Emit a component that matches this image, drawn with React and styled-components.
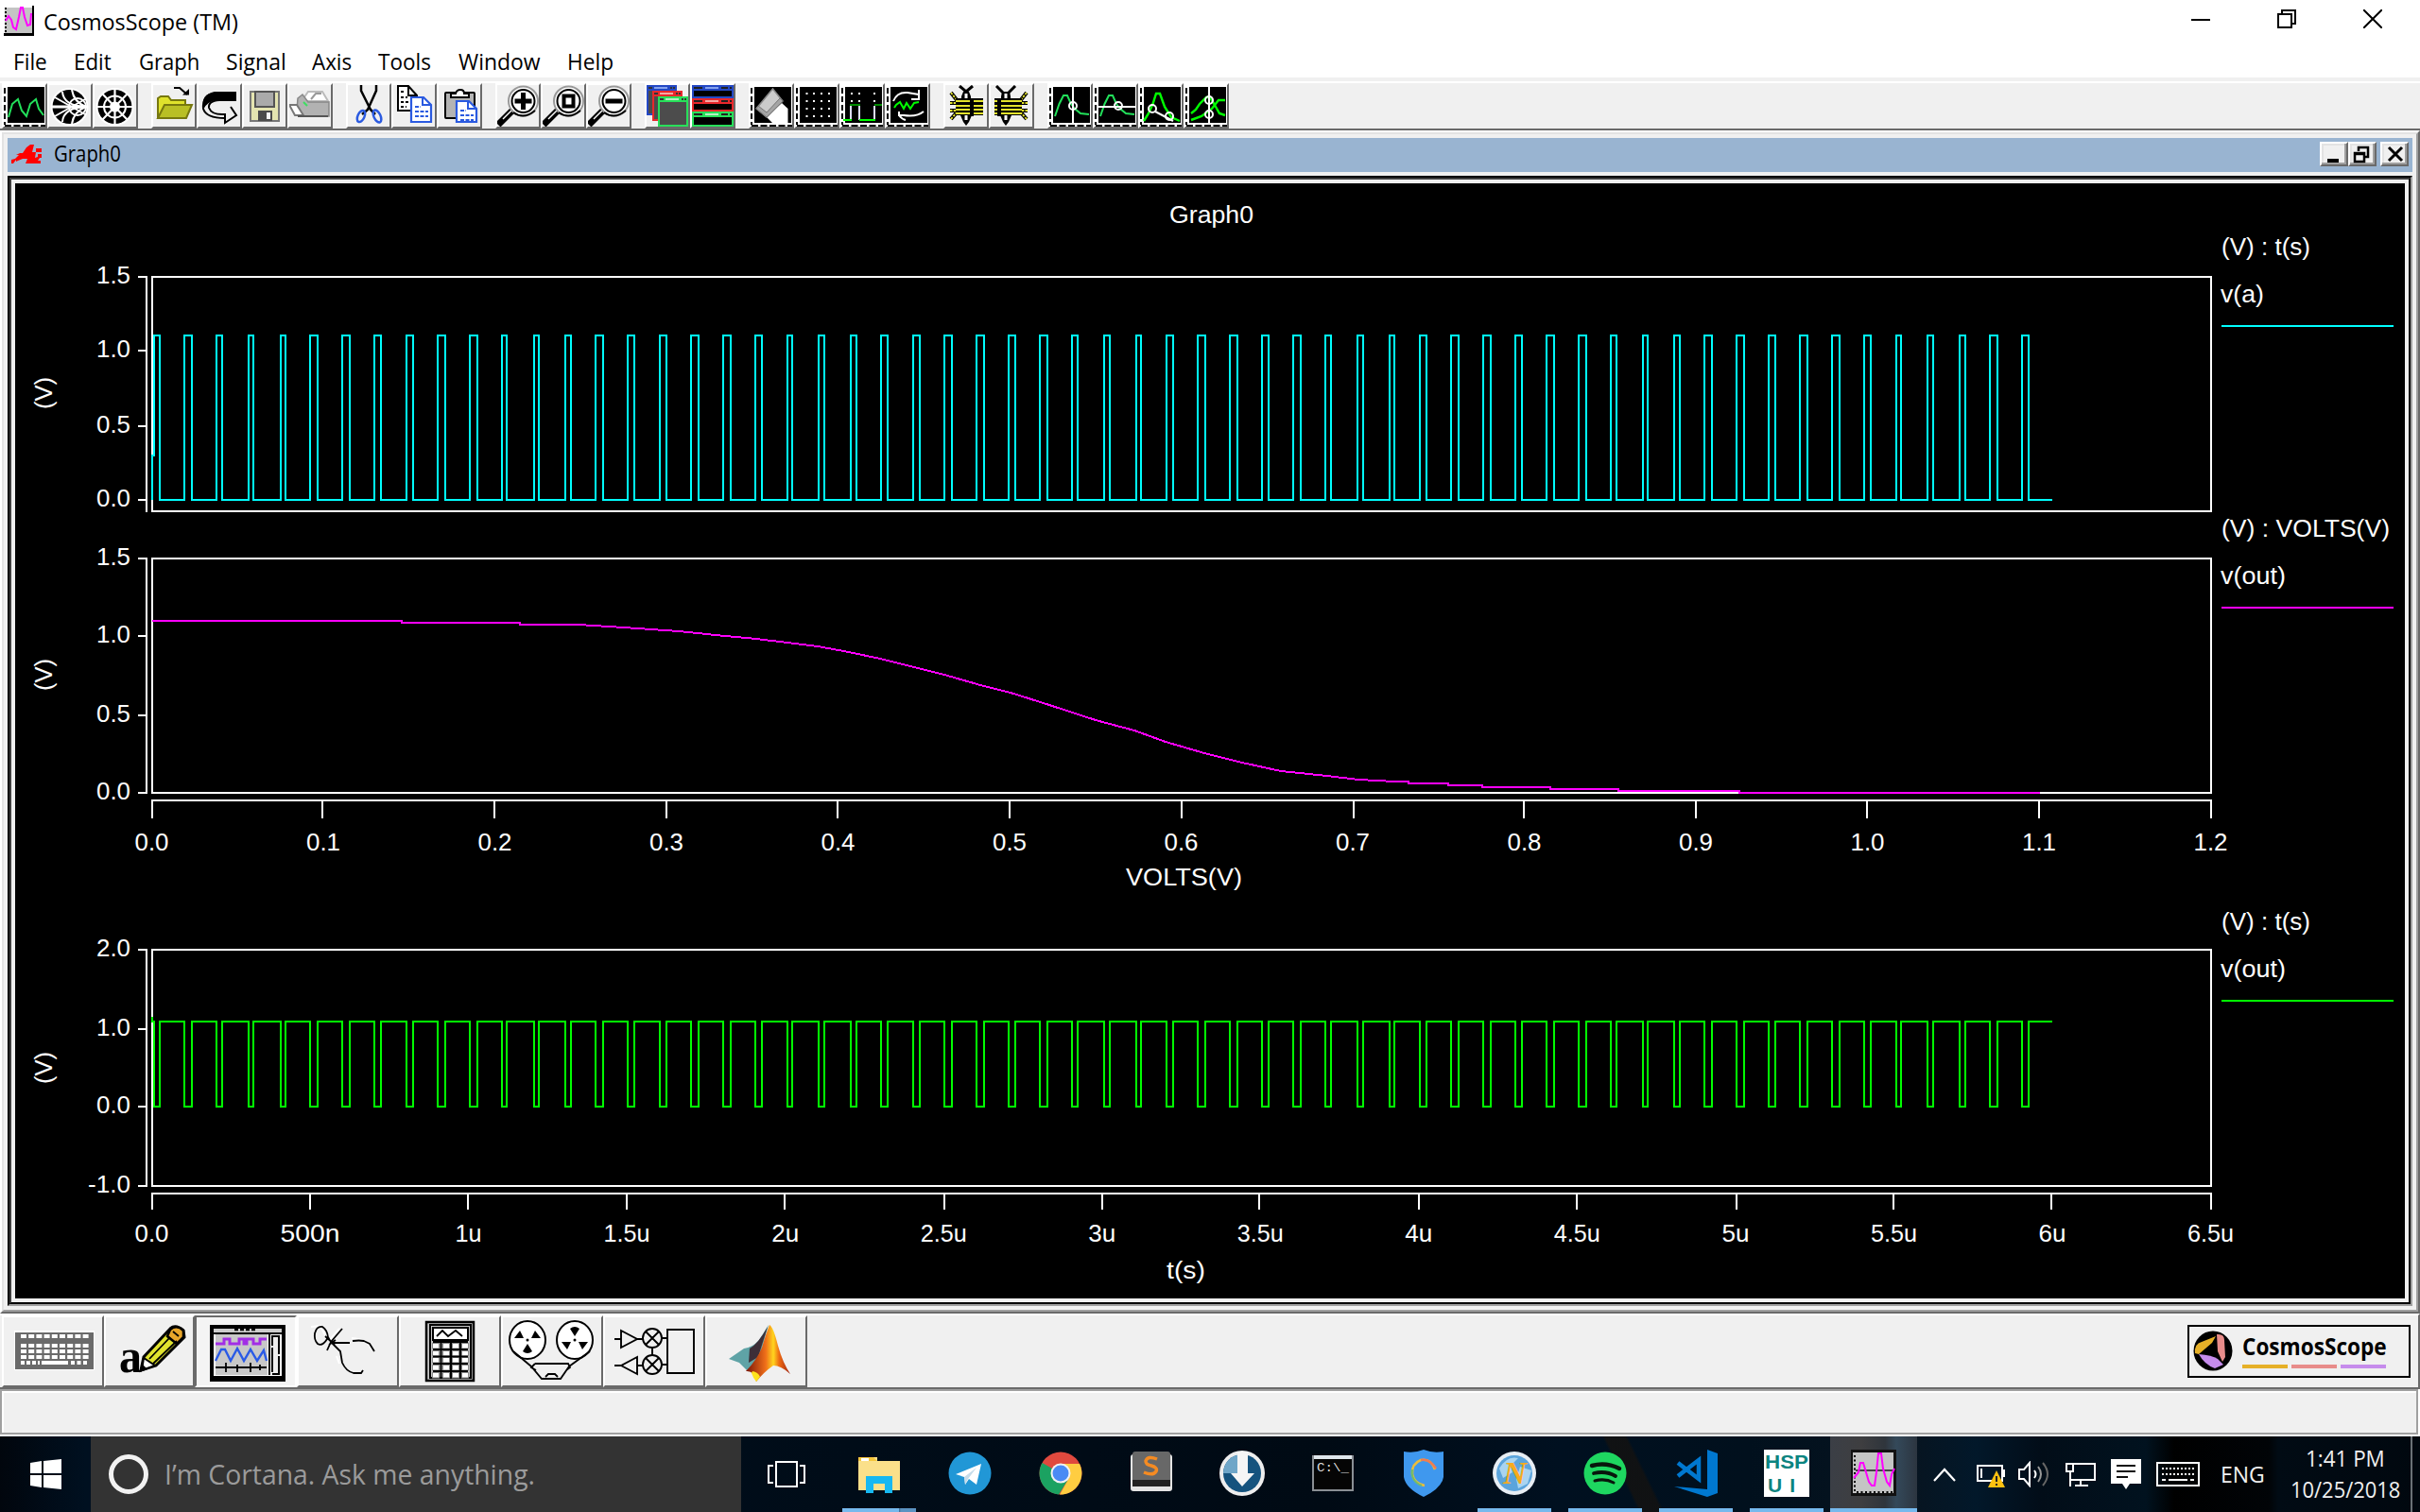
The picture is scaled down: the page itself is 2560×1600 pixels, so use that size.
import React, { useLayoutEffect, useRef, useState } from 'react';
import styled, { createGlobalStyle, css } from 'styled-components';

const UI_FONT = '"Open Sans", "Noto Sans", sans-serif';
const FACE = '#f0f0f0';
const SHADOW = '#6a6a6a';
const MID = '#a0a0a0';

const GlobalStyle = createGlobalStyle`
  * { box-sizing: border-box; }
  body { margin: 0; background: #fff; overflow: hidden; }
  svg { display: block; flex: none; }
`;

/* ---------- text set to a fixed measure ---------- */

const FitBox = styled.span`
  display: block;
  flex: none;
  width: ${(p) => p.$w}px;
  height: ${(p) => p.$size * 1.36}px;
  line-height: ${(p) => p.$size * 1.36}px;
  font-family: ${(p) => p.$font || UI_FONT};
  font-size: ${(p) => p.$size}px;
  font-weight: ${(p) => p.$weight || 400};
  color: ${(p) => p.$color || '#000'};
`;
const FitInner = styled.span`
  display: inline-block;
  white-space: nowrap;
  transform-origin: 0 50%;
`;

function Fit({ w, size, color, font, weight, children }) {
  const ref = useRef(null);
  const [k, setK] = useState(1);
  useLayoutEffect(() => {
    setK(w / ref.current.offsetWidth);
  }, [w, children]);
  return (
    <FitBox $w={w} $size={size} $color={color} $font={font} $weight={weight}>
      <FitInner ref={ref} style={{ transform: `scaleX(${k})` }}>{children}</FitInner>
    </FitBox>
  );
}

/* ---------- window chrome ---------- */

const Screen = styled.div`
  width: 2560px;
  height: 1600px;
  display: flex;
  flex-direction: column;
  background: ${FACE};
  overflow: hidden;
`;
const TitleBar = styled.header`
  height: 44px;
  flex: none;
  display: flex;
  align-items: flex-start;
  justify-content: space-between;
  background: #fff;
  padding: 6px 40px 0 4px;
`;
const TitleGroup = styled.div`
  display: flex;
  gap: 10px;
`;
const WindowControls = styled.div`
  display: flex;
  gap: 71px;
  padding-top: 4px;
`;
const MenuBar = styled.nav`
  height: 38px;
  flex: none;
  background: #fff;
  display: flex;
  padding: 4px 0 0 14px;
`;
const MenuItem = styled.div`
  width: ${(p) => p.$slot}px;
`;
const ToolBar = styled.div`
  height: 56px;
  flex: none;
  display: flex;
  gap: 14px;
  padding-left: 2px;
  border-top: 4px solid ${FACE};
  border-bottom: 2px solid ${SHADOW};
  box-shadow: inset 0 2px 0 #fff;
  padding-top: 2px;
`;
const ToolGroup = styled.div`
  display: flex;
`;
const ToolButton = styled.div`
  width: 48px;
  height: 48px;
  border: 2px solid;
  border-color: #fff ${SHADOW} ${SHADOW} #fff;
  background: ${FACE};
`;

/* ---------- graph child window ---------- */

const Child = styled.section`
  height: 1252px;
  flex: none;
  border: 2px solid;
  border-color: #fff ${SHADOW} ${SHADOW} #fff;
`;
const ChildInner = styled.div`
  height: 100%;
  border: 2px solid;
  border-color: #e3e3e3 ${MID} ${MID} #e3e3e3;
  padding: 4px;
  display: flex;
  flex-direction: column;
  gap: 4px;
`;
const ChildTitle = styled.div`
  height: 36px;
  flex: none;
  background: #99b4d1;
  display: flex;
  justify-content: space-between;
  padding: 4px 4px 0 4px;
`;
const ChildName = styled.div`
  display: flex;
  gap: 13px;
  align-items: center;
  height: 26px;
`;
const ChildButtons = styled.div`
  display: flex;
`;
const ChildButton = styled.div`
  width: 30px;
  height: 26px;
  margin-left: ${(p) => (p.$apart ? 4 : 0)}px;
  background: ${FACE};
  border: 2px solid;
  border-color: #fff ${SHADOW} ${SHADOW} #fff;
  box-shadow: inset -2px -2px 0 ${MID}, inset 2px 2px 0 #e3e3e3;
`;
const Well = styled.div`
  flex: 1;
  border: 2px solid;
  border-color: #000 ${MID} ${MID} #000;
`;
const WellInner = styled.div`
  height: 100%;
  border: 2px solid;
  border-color: #3f3f3f #000 #000 #3f3f3f;
  padding: 4px;
  background: ${FACE};
`;

/* ---------- lower tool palette and status ---------- */

const Palette = styled.div`
  height: 80px;
  flex: none;
  border-top: 2px solid #fff;
  border-bottom: 2px solid ${SHADOW};
  border-right: 2px solid ${SHADOW};
  display: flex;
  justify-content: space-between;
  padding-left: 2px;
`;
const PaletteRow = styled.div`
  display: flex;
`;
const PaletteButton = styled.div`
  width: ${(p) => p.$w || 108}px;
  height: 76px;
  border: 2px solid;
  border-color: #fff ${SHADOW} ${SHADOW} #fff;
  ${(p) => p.$down && css`
    border-color: ${SHADOW} #fff #fff ${SHADOW};
    background: #f4f4f4;
  `}
`;
const Brand = styled.div`
  width: 236px;
  height: 56px;
  margin: 10px 8px 0 0;
  border: 2px solid #000;
  display: flex;
  gap: 10px;
  padding: 4px 0 0 4px;
`;
const BrandText = styled.div`
  display: flex;
  flex-direction: column;
`;
const BrandBars = styled.div`
  display: flex;
  gap: 4px;
  margin-top: 3px;
`;
const BrandBar = styled.div`
  width: 48px;
  height: 4px;
  background: ${(p) => p.$c};
`;
const Status = styled.div`
  height: 50px;
  flex: none;
  border-bottom: 2px solid #fff;
  border-right: 2px solid #fff;
`;
const StatusInner = styled.div`
  height: 100%;
  border: 2px solid ${MID};
  box-shadow: inset 2px 2px 0 #fff;
`;

/* ---------- task bar ---------- */

const TaskBar = styled.footer`
  height: 80px;
  flex: none;
  display: flex;
  background:
    linear-gradient(64deg, transparent 0 1558px, rgba(18, 18, 18, 0.9) 1561px 1580px, transparent 1583px),
    linear-gradient(90deg, #01060d 0, #001020 90px, #000c18 900px, #000a14 1400px, #001020 1650px, #01101d 1850px, #071420 2020px, #02182a 2090px, #020d18 2160px, #01121f 2270px, #000 2300px, #010407 2400px, #010b14 2410px, #01080f 2560px);
`;
const Start = styled.div`
  width: 96px;
  flex: none;
  display: flex;
  align-items: center;
  justify-content: center;
`;
const Search = styled.div`
  width: 688px;
  flex: none;
  background: #333;
  display: flex;
  align-items: center;
  gap: 16px;
  padding-left: 18px;
`;
const TaskView = styled.div`
  width: 98px;
  flex: none;
  display: flex;
  align-items: center;
  justify-content: center;
  padding-right: 2px;
`;
const Task = styled.div`
  width: 96px;
  flex: none;
  display: flex;
  flex-direction: column;
  align-items: center;
  justify-content: space-between;
  padding-top: 14px;
`;
const ActiveTask = styled(Task)`
  width: 92px;
  margin-left: -2px;
  background: linear-gradient(90deg, #3b3f46 0, #3e3e40 33px, #2f353c 58px, #34495a 70px, #2c3540 92px);
`;
const Underline = styled.div`
  width: ${(p) => p.$w}px;
  height: 4px;
  background: ${(p) => (p.$stack ? 'linear-gradient(90deg, #76b9ed 60px, #3f6b91 60px, #5b93c2 62px)' : p.$on ? '#76b9ed' : 'transparent')};
`;
const Tray = styled.div`
  flex: 1;
  display: flex;
  align-items: center;
  justify-content: flex-end;
`;
const TrayItem = styled.div`
  margin-left: ${(p) => p.$gap}px;
  flex: none;
`;
const Clock = styled.div`
  width: 114px;
  margin-left: 28px;
  display: flex;
  flex-direction: column;
  align-items: center;
`;
const ShowDesktop = styled.div`
  align-self: stretch;
  width: 10px;
  margin-left: 12px;
  border-left: 2px solid #6b7176;
`;

/* ---------- toolbar drawings ---------- */

const Glyph = ({ children }) => (
  <svg width="44" height="44" viewBox="2 2 44 44">{children}</svg>
);
const PlotBase = () => (
  <g>
    <rect x="2" y="2" width="44" height="44" fill="#fff" />
    <rect x="6" y="4" width="39" height="38" fill="#000" />
    <path d="M3 5V44" stroke="#000" strokeWidth="2" strokeDasharray="6 3" />
    <path d="M3 45H46" stroke="#000" strokeWidth="2" strokeDasharray="7 2.5" />
  </g>
);
const Line = ({ d, c = '#000', w = 2, ...r }) => (
  <path d={d} fill="none" stroke={c} strokeWidth={w} {...r} />
);

const NewGraph = () => (
  <Glyph><PlotBase /><Line c="#22e05a" d="M7 36L11 22L17 17L21 29L26 35L30 22L36 17L39 27L44 34" /></Glyph>
);
const Smith = () => (
  <Glyph>
    <circle cx="23.5" cy="25" r="20" fill="#fff" /><circle cx="23.5" cy="25" r="18" />
    <g fill="none" stroke="#fff" strokeWidth="2">
      <path d="M5 25H42" strokeWidth="3" />
      <circle cx="32" cy="25" r="9" /><path d="M16 9Q17 24 41 25Q17 26 16 41M26 7Q28 20 41 25Q28 30 26 43M8 15L40 33M8 35L40 17" />
    </g>
  </Glyph>
);
const Polar = () => (
  <Glyph>
    <circle cx="23.5" cy="25" r="20" fill="#fff" /><circle cx="23.5" cy="25" r="18" />
    <g fill="none" stroke="#fff" strokeWidth="2">
      <circle cx="23.5" cy="25" r="11.5" /><circle cx="23.5" cy="25" r="4.5" fill="#fff" />
      <path d="M23.500 6V44M5 25H42M10 11L37 39M10 39L37 11" strokeWidth="2.200" />
    </g>
  </Glyph>
);
const Folder = () => (
  <Glyph>
    <path d="M7 37V16L10 14H18L21 18H36V23" fill="#dfe22c" stroke="#77780f" strokeWidth="2" />
    <path d="M7 37L14 23H43L37 37Z" fill="#b9bf25" stroke="#77780f" strokeWidth="2" />
    <Line d="M24 5H30L38 12" /><path d="M33 12.500H40V6Z" />
  </Glyph>
);
const Undo = () => (
  <Glyph>
    <path d="M42 10V18H22Q11 19 7 28Q4 10 20 10Z" />
    <Line d="M42 10H19Q6 13 7 27Q10 37 30 37V42L42 34L36 25M30 37V33Q16 34 13 26Q12 19 24 18H42" />
  </Glyph>
);
const Floppy = () => (
  <Glyph>
    <rect x="9" y="9" width="30" height="31" fill="#e4e4b0" stroke="#777" strokeWidth="2" />
    <rect x="14" y="9" width="20" height="16" fill="#aaa" stroke="#555" strokeWidth="2" />
    <rect x="17" y="29" width="15" height="11" fill="#4b4b4b" /><rect x="26" y="31" width="4" height="7" fill="#f5f5f5" />
  </Glyph>
);
const Printer = () => (
  <Glyph>
    <path d="M15 19L22 9H37L43 19Z" fill="#fff" stroke="#bbb" strokeWidth="2" />
    <path d="M25 17L30 11H36" fill="none" stroke="#999" strokeWidth="2" />
    <path d="M11 16L16 12L22 20H44V35H14L10 28Z" fill="#b2b2b2" stroke="#888" strokeWidth="1.500" />
    <path d="M2 23H10L17 34H8Z" fill="#fff" stroke="#777" strokeWidth="2" />
    <Line c="#555" d="M11 35H43" w={2} /><Line c="#3ce060" d="M17 20L21 24" />
  </Glyph>
);
const Cut = () => (
  <Glyph>
    <Line d="M16 2V8L26 28L31 33M32 2V8L23 28L17 33" w={2.5} />
    <g fill="none" stroke="#2a5ae0" strokeWidth="2.500">
      <ellipse cx="16" cy="35" rx="3.500" ry="6.500" transform="rotate(25 16 35)" /><ellipse cx="33" cy="35" rx="3.500" ry="7" transform="rotate(-25 33 35)" />
    </g>
  </Glyph>
);
const BluePage = ({ y = 14 }) => (
  <g>
    <path d={`M21 ${y}H34L42 ${y + 8}V41H21Z`} fill="#fff" stroke="#2a5ae0" strokeWidth="2.200" />
    <Line c="#2a5ae0" d={`M33 ${y}V${y + 8}H42`} />
    <Line c="#2a5ae0" d={`M25 ${y + 10}H31M25 ${y + 15}H39M25 ${y + 20}H39`} strokeDasharray="4 1.500" />
  </g>
);
const Copy = () => (
  <Glyph>
    <path d="M7 3H18L27 13V29H7Z" fill="#fff" stroke="#000" strokeWidth="2" /><Line d="M18 3V13H27" />
    <Line d="M10 9H14M10 15H17M10 20H19M10 25H16" strokeDasharray="3 2" /><BluePage y={15} />
  </Glyph>
);
const Paste = () => (
  <Glyph>
    <rect x="9" y="10" width="31" height="27" rx="1" fill="#b4b4b4" stroke="#000" strokeWidth="2" />
    <path d="M15 15V11H20Q21 7 25 7Q29 7 29 11H34V15Z" fill="#fff" stroke="#000" strokeWidth="2" /><BluePage y={19} />
  </Glyph>
);
const Zoom = ({ children }) => (
  <Glyph>
    <Line d="M3 44L19 28" w={7} /><Line c="#fff" d="M8 38L17 29" w={1.5} />
    <circle cx="29.500" cy="19" r="15.500" fill="#fff" stroke="#9a9a9a" strokeWidth="2" />
    <circle cx="29.500" cy="19" r="12" fill="#fff" stroke="#000" strokeWidth="2" />
    <Line d="M19 31Q30 39 42 29" />
    {children}
  </Glyph>
);
const Win = ({ x, y, c, light }) => (
  <g>
    <rect x={x} y={y} width="32" height="32" fill={c} /><rect x={x + 2} y={y + 6} width="28" height="24" fill="#4c4c4c" />
    <rect x={x + 8} y={y + 2} width="14" height="2" fill={light} />
    <path d={`M${x + 2} ${y + 3}h4M${x + 25} ${y + 3}h2M${x + 28} ${y + 3}h2`} stroke="#333" strokeWidth="2" />
  </g>
);
const Cascade = () => (
  <Glyph>
    <Win x={2} y={2} c="#2448c4" light="#86a2ee" /><Win x={8} y={8} c="#e8282c" light="#f4a8a4" /><Win x={14} y={14} c="#28e05a" light="#b6f0c2" />
  </Glyph>
);
const Tile = () => (
  <Glyph>
    {[['#2448c4', '#86a2ee', 2], ['#e8282c', '#f4a8a4', 16], ['#28e05a', '#b6f0c2', 30]].map(([c, l, y]) => (
      <g key={y}>
        <rect x="2" y={y} width="44" height={y === 30 ? 16 : 14} fill={c} /><rect x="4" y={y + 6} width="40" height={y === 30 ? 8 : 6} />
        <rect x="16" y={y + 2} width="14" height="2" fill={l} /><path d={`M4 ${y + 3}h9M33 ${y + 3}h7M42 ${y + 3}h2`} stroke="#222" strokeWidth="2" />
      </g>
    ))}
  </Glyph>
);
const Erase = () => (
  <Glyph>
    <PlotBase />
    <path d="M35 21L41.500 27V42H25L18 35Z" fill="#fff" />
    <path d="M25.500 6L36 19L19 36L8 27Z" fill="#cbcbcb" stroke="#888" strokeWidth="1.500" />
    <path d="M36 19L19 36L8 27L10 24L19 31L33 16Z" fill="#a5a5a5" stroke="#777" strokeWidth="1" />
  </Glyph>
);
const Dots = () => (
  <Glyph>
    <PlotBase />
    {[11, 19, 27, 35].map((y) => [13.5, 21, 29, 37].map((x) => <rect key={`${x}-${y}`} x={x - 1} y={y - 1} width="2" height="2" fill="#fff" />))}
  </Glyph>
);
const Snap = () => (
  <Glyph>
    <PlotBase />
    {[11, 19].map((y) => [13, 21, 37].map((x) => <rect key={`${x}-${y}`} x={x - 1} y={y - 1} width="2" height="2" fill="#fff" />))}
    <Line c="#dcdcff" d="M12 24V39M21 24V39M37 24V39" /><Line c="#008a00" d="M11 23H22M37 23H45" /><Line c="#00ff00" d="M4 39H13M21 39H38" />
  </Glyph>
);
const Refresh = () => (
  <Glyph>
    <PlotBase />
    <Line c="#fff" d="M9 19Q13 9 24 10L36 12V7V17H28M41 30Q34 36 20 34H15V30M15 34Q18 38 22 39" />
    <Line c="#00ff00" d="M10 26L12 23L16 20L20 27L23 21L27 27L31 21L36 20" />
  </Glyph>
);
const Legs = ({ c, w, dash }) => (
  <Line c={c} d="M8 10L15 19M7 21H15M7 29H15M8 38L15 30" w={w} strokeDasharray={dash} />
);
const BugBody = ({ head, seam }) => (
  <g>
    <g transform={`translate(${head - 24} 0)`}>
      <path d="M19 14L21 9H27L29 14V18H19ZM18 34H30L27 41L24 45L21 41Z" /><path d="M22.500 11H25.500V16H22.500ZM22.500 34H25.500V39H22.500Z" fill="#fff" />
    </g>
    <Legs w={4} /><Legs c="#e2e22c" w={1.8} dash="2.5 1.2" />
    <rect x="13" y="16" width="29" height="18" /><Line c="#e2e22c" d="M13 19H42M13 24H42M13 28H42M13 32H42" w={2.2} />
    <rect x={seam - 2} y="16" width="4" height="19" />
  </g>
);
const BugClosed = () => (
  <Glyph><Line d="M17 3L24 9L31 3M24 8V16" w={3} /><BugBody head={24} seam={30} /></Glyph>
);
const BugOpen = () => (
  <Glyph>
    <Line d="M8 3L15 10V15M28 3L21 10V15" w={3} />
    <g transform="translate(48 0) scale(-1 1)"><BugBody head={30} seam={37} /></g>
  </Glyph>
);
const PEAK = 'M8 35L12.500 22L17 13H21L25 22L29 27L35 32L44 33';
const MeasureX = () => (
  <Glyph><PlotBase /><Line c="#22e05a" d={PEAK} /><Line c="#fff" d="M27 4V42" /><circle cx="27" cy="24" r="4" fill="none" stroke="#fff" strokeWidth="2" /></Glyph>
);
const MeasureY = () => (
  <Glyph><PlotBase /><Line c="#22e05a" d={PEAK} /><Line c="#fff" d="M6 25H45" /><circle cx="27" cy="24" r="4" fill="none" stroke="#fff" strokeWidth="2" /></Glyph>
);
const MeasurePair = () => (
  <Glyph>
    <PlotBase /><Line c="#00ff00" w={2.4} d="M6 40L11 32L15.500 22L19 11H23L28 25L35 36L44 40" />
    <g fill="none" stroke="#fff" strokeWidth="2"><circle cx="15" cy="27" r="4" /><circle cx="33" cy="35" r="4" /><path d="M18 30L37 40" /></g>
  </Glyph>
);
const MeasureCross = () => (
  <Glyph>
    <PlotBase /><Line c="#00ff00" w={2.4} d="M8 32L13 28L17 22L24 15H28L33 23L38 32L44 34M8 39L19 35L30 27L37 18H44" />
    <g fill="none" stroke="#fff" strokeWidth="2"><path d="M27 4V42" /><circle cx="27" cy="18" r="4" /><circle cx="27" cy="33" r="4" /></g>
  </Glyph>
);

const TOOL_GROUPS = [
  [<NewGraph />, <Smith />, <Polar />],
  [<Folder />, <Undo />, <Floppy />, <Printer />],
  [<Cut />, <Copy />, <Paste />],
  [
    <Zoom><Line d="M29.500 10V28M20.500 19H38.500" w={5} /></Zoom>,
    <Zoom><rect x="24.500" y="13.500" width="10" height="11" fill="none" stroke="#000" strokeWidth="4" /></Zoom>,
    <Zoom><Line d="M20.500 19H38.500" w={5} /></Zoom>,
  ],
  [<Cascade />, <Tile />],
  [<Erase />, <Dots />, <Snap />, <Refresh />],
  [<BugClosed />, <BugOpen />],
  [<MeasureX />, <MeasureY />, <MeasurePair />, <MeasureCross />],
];

/* ---------- palette drawings ---------- */

const Pane = ({ w = 108, children }) => (
  <svg width={w - 4} height="72" viewBox={`2 2 ${w - 4} 72`}>{children}</svg>
);
const Keyboard = () => (
  <Pane>
    <rect x="13" y="16" width="85" height="42" fill="#fff" /><rect x="14" y="18" width="83" height="39" fill="#6a6a6a" />
    <g fill="none" stroke="#fff" strokeWidth="4">
      <path d="M20 22H92M20 32H92M20 38H92M20 44H92" strokeDasharray="6 2.200" /><path d="M20 50H40" strokeDasharray="4 2" /><path d="M42 50H70" /><path d="M73 50H90" strokeDasharray="4 2.500" />
    </g>
  </Pane>
);
const Annotate = () => (
  <Pane w={96}>
    <text x="16" y="60" fontFamily='"Liberation Serif", serif' fontWeight="700" fontSize="50" textLength="24" lengthAdjust="spacingAndGlyphs">a</text>
    <path d="M39 58L42 44L70 14Q76 9 84 16L85 23L55 53Z" fill="#e0e32e" stroke="#000" strokeWidth="3" />
    <path d="M40 58L42 45L54 53Z" fill="#fff" stroke="#000" strokeWidth="2" /><path d="M38 60L41 52L46 57Z" />
    <path d="M70 15Q77 9 84 16L84 23L77 30L67 22Z" fill="#e8a62a" stroke="#000" strokeWidth="2.500" />
    <Line d="M48 46L70 23M52 51L77 27M73 17L79 22" w={1.8} />
  </Pane>
);
const Scope = () => (
  <Pane>
    <rect x="16" y="10" width="80" height="60" /><rect x="20" y="14" width="72" height="50" fill="#fff" />
    <rect x="20" y="14" width="72" height="4" fill="#ccc" /><Line d="M42 15H64" w={2.5} strokeDasharray="4 2" />
    <rect x="22" y="20" width="55" height="43" fill="#c8c8c8" /><Line d="M20 19H92M79 19V63" />
    <rect x="82" y="22" width="7" height="40" fill="#eee" stroke="#000" strokeWidth="2" strokeDasharray="26 2" />
    <Line c="#a22ee6" w={3} d="M22 30H31V25H37V30H47V25H52V30H55V25H62V30H69V25H76" />
    <Line c="#2a5ae6" w={2.4} d="M22 48L28 36H32L38 48L45 35L52 48L59 36L66 48L73 37L76 48" />
    <Line d="M22 55H76M33 50V60M45 52V60M59 50V60M69 52V58" w={1.8} />
  </Pane>
);
const Probe = () => (
  <Pane>
    <g fill="none" stroke="#fff" strokeWidth="2" transform="translate(-2 -1)"><path d="M17 13L27 12L33 24M36 28L47 15M60 25Q78 26 81 37M44 44L47 52" /></g>
    <Line w={1.8} d="M32 25Q27 33 22 30Q18 26 19 19Q21 11 27 12Q32 15 33 23L36 28L32 37M30 22L40 31M34 31L41 26M36 28L48 14M36 28L41 29H56M59 27Q66 26 71 27L77 30L82 38M36 28L46 38L48 50Q52 59 60 61H68L70 58" />
  </Pane>
);
const Calculator = () => (
  <Pane>
    <rect x="29" y="7" width="50" height="62" fill="#c8c8c8" stroke="#000" strokeWidth="2.500" />
    <rect x="33" y="10" width="43" height="56" fill="none" stroke="#000" strokeWidth="2" />
    <rect x="36" y="13" width="37" height="13" fill="#fff" stroke="#000" strokeWidth="2" /><Line d="M40 22L46 16L52 22L60 16L67 22" w={1.8} />
    {[32, 40, 47, 55, 63].map((y) => [39, 50, 60, 70].map((x) => <rect key={`${x}-${y}`} x={x - 3.5} y={y - 2.5} width="7" height="5.500" fill="#fff" stroke="#888" strokeWidth="1" />))}
    <Line d="M36 28H73M36 36H73M36 43.500H73M36 51H73M36 59H73M44.500 28V66M55 28V66M65 28V66" />
  </Pane>
);
const Reel = ({ x, up }) => (
  <g>
    <ellipse cx={x} cy="26" rx="19" ry="20" fill="#fff" stroke="#000" strokeWidth="2" />
    <g transform={up ? undefined : `rotate(180 ${x} 26)`}>
      <path d={`M${x - 5} 14Q${x} 10 ${x + 5} 14L${x} 22ZM${x - 14} 28L${x - 4} 28L${x - 8} 36ZM${x + 14} 28L${x + 4} 28L${x + 8} 36Z`} />
    </g>
    <circle cx={x} cy="26" r="1.500" />
  </g>
);
const Reels = () => (
  <Pane>
    <Reel x={28} /><Reel x={78} up />
    <Line d="M13 38L32 54L43 67H63L72 54L94 38M36 51H71L73 55L69 58M36 51L32 55L37 58M47 65L50 62H57L60 65" w={1.8} />
  </Pane>
);
const Mixer = () => (
  <Pane>
    <Line w={1.9} d="M12 25H19V16L36 25L19 34V25M36 25H42M62 24H68M12 53H19L36 44V62L19 53M36 53H42M62 52H68M52 34V42M68 15H96V61H68ZM45 17L59 31M59 17L45 31M45 45L59 59M59 45L45 59" />
    <circle cx="52" cy="24" r="10" fill="none" stroke="#000" strokeWidth="1.900" /><circle cx="52" cy="52" r="10" fill="none" stroke="#000" strokeWidth="1.900" />
  </Pane>
);
const Membrane = () => (
  <Pane>
    <defs>
      <linearGradient id="flame" x1="0" x2="1"><stop offset="0" stopColor="#7a1408" /><stop offset=".45" stopColor="#f0701a" /><stop offset=".62" stopColor="#ffd51e" /><stop offset=".75" stopColor="#ee6a12" /><stop offset="1" stopColor="#a02412" /></linearGradient>
    </defs>
    <path d="M25 46L41 35Q50 34 57 26L67 10L58 42L50 55L44 58L36 50Z" fill="#5fa3a6" /><path d="M47 35Q56 30 66 12L56 44L46 50Z" fill="#3d2e38" />
    <path d="M68 10Q72 12 77 32Q82 50 90 62Q80 53 72 53Q62 60 54 70Q52 58 43 59Q54 48 60 34Q64 20 68 10Z" fill="url(#flame)" />
    <path d="M50 59Q56 60 58 65L54 70Q51 67 49 61Z" fill="#ffe31c" />
  </Pane>
);
const BrandMark = () => (
  <svg width="42" height="43" viewBox="0 0 42 43">
    <ellipse cx="21" cy="21.500" rx="20.500" ry="21" />
    <path d="M2 24Q1 14 9 12L24 6L20 13L6 25Z" fill="#e6b028" /><path d="M25 4Q33 3 33 10L34 28L31 33L26 22Z" fill="#e88c8a" /><path d="M6 25Q20 26 26 30L32 36L23 40Q12 36 6 25Z" fill="#c68cec" />
  </svg>
);

/* ---------- chart ---------- */

const PX = 1.8741;
const snap = (n) => Math.round(Math.round(n) * PX + 0.4);
const pulses = Array.from({ length: 59 }, (_, k) => [snap(103.93 + 17.886 * k), snap(107.6 + 17.886 * k)]);
const wave = (start, from, to) =>
  `${start}${pulses.map(([a, b]) => `H${a}V${to}H${b}V${from}`).join('')}H2171`;
const CYAN = wave('M161 529V482H163V355H169V529', 529, 355);
const GREEN = wave('M161 1076V1081H163V1171H169V1081', 1081, 1171);
const MAGENTA =
  'M161 657H425V659H550V661H612L660 664L718 668L767 673L800 676L833 680L865 684L898 690L931 697L963 705L999 714L1037 725L1069 733L1110 746L1159 762L1200 773L1233 785L1274 797L1314 807L1355 816L1404 821L1437 825L1476 827H1490V829H1532V831H1568V833H1640V835H1712V837H1840V839H2158';

const Strokes = styled.path`
  fill: none;
  stroke: ${(p) => p.$c};
  stroke-width: 2;
  shape-rendering: crispEdges;
`;
const ChartText = styled.text`
  font-family: "Liberation Sans", Arial, sans-serif;
  font-size: 25.500px;
  fill: #fff;
`;
const Txt = ({ x, y, w, children }) => (
  <ChartText x={x} y={y} textLength={w} lengthAdjust="spacingAndGlyphs">{children}</ChartText>
);

const Frame = ({ top, bottom, ticks, mid }) => (
  <g>
    <Strokes $c="#fff" d={`M161 ${top}H2339V${bottom}H161ZM155 ${top - 1}V${bottom + 1}${ticks.map(([y]) => `M146 ${y}H155`).join('')}`} />
    {ticks.map(([y, label]) => (
      <Txt key={label} x={label[0] === '-' ? 93 : 102} y={y + 7} w={label[0] === '-' ? 45 : 36}>{label}</Txt>
    ))}
    <g transform={`translate(55 ${mid + 17}) rotate(-90)`}><Txt x={0} y={0} w={34}>(V)</Txt></g>
  </g>
);
const Axis = ({ y, len, step, labels }) => (
  <g>
    <Strokes $c="#fff" d={`M160 ${y}H2340${labels.map((_, i) => `M${Math.round(Math.floor((161.4 + i * step) / PX) * PX)} ${y}V${y + len}`).join('')}`} />
    {labels.map(([t, w], i) => <Txt key={t} x={160.5 + i * step - w / 2} y={y + 51 + (len > 18 ? 2 : 0)} w={w}>{t}</Txt>)}
  </g>
);
const Legend = ({ y, title, w, name, nw, c }) => (
  <g>
    <Txt x={2350} y={y} w={w}>{title}</Txt>
    <Txt x={2349} y={y + 50} w={nw}>{name}</Txt>
    <Strokes $c={c} d={`M2350 ${y + 75}H2532`} />
  </g>
);

const Chart = () => (
  <svg width="2528" height="1180" viewBox="16 194 2528 1180">
    <rect x="16" y="194" width="2528" height="1180" fill="#000" />
    <Txt x={1237} y={236} w={89}>Graph0</Txt>
    <Frame top={293} bottom={541} mid={416} ticks={[[293, '1.5'], [371, '1.0'], [451, '0.5'], [529, '0.0']]} />
    <Strokes $c="#0ff" d={CYAN} />
    <Legend y={270} title="(V) : t(s)" w={94} name="v(a)" nw={46} c="#0ff" />
    <Frame top={591} bottom={839} mid={714} ticks={[[591, '1.5'], [673, '1.0'], [757, '0.5'], [839, '0.0']]} />
    <Strokes $c="#f0f" d={MAGENTA} />
    <Axis y={847} len={19} step={181.5} labels={['0.0', '0.1', '0.2', '0.3', '0.4', '0.5', '0.6', '0.7', '0.8', '0.9', '1.0', '1.1', '1.2'].map((t) => [t, 36])} />
    <Txt x={1191} y={937} w={123}>VOLTS(V)</Txt>
    <Legend y={568} title="(V) : VOLTS(V)" w={178} name="v(out)" nw={69} c="#f0f" />
    <Frame top={1005} bottom={1255} mid={1130} ticks={[[1005, '2.0'], [1089, '1.0'], [1171, '0.0'], [1255, '-1.0']]} />
    <Strokes $c="#0f0" d={GREEN} />
    <Axis y={1263} len={17} step={167.54} labels={[['0.0', 36], ['500n', 63], ['1u', 28], ['1.5u', 49], ['2u', 29], ['2.5u', 49], ['3u', 29], ['3.5u', 49], ['4u', 29], ['4.5u', 49], ['5u', 29], ['5.5u', 49], ['6u', 29], ['6.5u', 49]]} />
    <Txt x={1234} y={1353} w={41}>t(s)</Txt>
    <Legend y={984} title="(V) : t(s)" w={94} name="v(out)" nw={69} c="#0f0" />
  </svg>
);

/* ---------- task bar drawings ---------- */

const Tile48 = ({ children }) => <svg width="48" height="50" viewBox="0 0 48 50">{children}</svg>;
const ScopeTile = ({ w = 48, h = 50 }) => (
  <svg width={w} height={h} viewBox="0 0 48 50" preserveAspectRatio="none">
    <rect width="48" height="49" fill="#111" /><rect x="2" y="3" width="43" height="43" fill="#c4c4c4" />
    <Line d="M4 6V46M6 45H44" strokeDasharray="2 2.500" w={2} /><Line c="#444" d="M5 22H45" />
    <Line c="#f0f" d="M3 30L8 24L10 14H13L16 24L19 34L22 38H25L27 24L29 4H32L34 20L38 34L41 38L43 26L46 20" />
  </svg>
);
const AppIcon = () => (
  <svg width="32" height="32" viewBox="0 0 32 32">
    <rect x="1" y="2" width="29" height="28" fill="#c4c4c4" /><path d="M0 29H30V0H32V32H0Z" /><Line d="M2 2V29" strokeDasharray="2 2" />
    <Line c="#f0f" d="M2 16L5 11L8 15L10 23L13 25L16 12L18 2H20L22 12L25 21L28 20L29 8" />
  </svg>
);

const TASKS = [
  { key: 'files', stack: true, icon: (
    <Tile48><path d="M2 8H22V12H46V43H2Z" fill="#fbe08a" /><path d="M2 8H18L22 12H2Z" fill="#f5c63c" /><rect x="5" y="9" width="8" height="3" fill="#fff" /><path d="M10 46V28H38V46H30V36H18V46Z" fill="#17b8f2" /></Tile48>) },
  { key: 'telegram', icon: (
    <Tile48><circle cx="24" cy="25" r="22.500" fill="#2197d6" /><path d="M9 26L36 15L31 37L23 31L19 37L18 29Z" fill="#fff" /><path d="M18 29L31 19L22 31L19 37Z" fill="#c5dcea" /></Tile48>) },
  { key: 'chrome', icon: (
    <Tile48><circle cx="24" cy="25" r="22.500" fill="#e0493e" /><path d="M24 25L4.500 14A22.500 22.500 0 0 0 22 47.500L33 30Z" fill="#1ba261" /><path d="M24 15H44A22.500 22.500 0 0 1 23 47.500L34 28Z" fill="#ffcd41" /><circle cx="24" cy="25" r="10.500" fill="#f2f2f2" /><circle cx="24" cy="25" r="8.500" fill="#4a8af4" /></Tile48>) },
  { key: 'sublime', icon: (
    <Tile48><rect x="2" y="5" width="44" height="39" rx="3" fill="#e4e4e4" /><rect x="4" y="2" width="40" height="34" rx="3" fill="#686868" /><rect x="4" y="32" width="40" height="7" fill="#222" /><path d="M30 10Q20 6 18 12Q18 16 24 17Q31 19 29 23Q26 28 16 24" fill="none" stroke="#f58b22" strokeWidth="3.500" /></Tile48>) },
  { key: 'downloader', icon: (
    <Tile48><circle cx="24" cy="25" r="24" fill="#eee" /><circle cx="24" cy="25" r="20" fill="#15537e" /><path d="M4 25A20 20 0 0 1 24 5V25Z" fill="#6fa6c8" /><path d="M19 2H30V25H37L24 39L12 25H19Z" fill="#f5f5f5" /></Tile48>) },
  { key: 'cmd', icon: (
    <Tile48><rect x="2" y="6" width="44" height="38" fill="#8a8f94" /><rect x="4" y="10" width="40" height="32" fill="#050505" /><path d="M4 8H44" stroke="#dfe6ec" strokeWidth="4" /><text x="7" y="23" fill="#ddd" fontFamily='"Liberation Mono", monospace' fontSize="13" textLength="34" lengthAdjust="spacingAndGlyphs">C:\_</text></Tile48>) },
  { key: 'shield', icon: (
    <Tile48><path d="M3 2Q14 4 24 0Q34 4 45 2V29Q43 41 24 50Q5 41 3 29Z" fill="#3f98ee" /><path d="M36 21Q32 9 21 11Q11 15 12 26Q14 36 25 38" fill="none" stroke="#ecbd3b" strokeWidth="2.500" /><path d="M37 20Q30 9 21 11" fill="none" stroke="#f07c52" strokeWidth="2.500" /><path d="M12 21Q10 33 22 38" fill="none" stroke="#6fbd6a" strokeWidth="2" /></Tile48>) },
  { key: 'navigator', on: true, icon: (
    <Tile48><circle cx="24" cy="25" r="23" fill="#e8eef4" /><circle cx="24" cy="25" r="19" fill="#5ba4dc" /><path d="M8 20Q16 6 28 9L20 17L22 24L12 30ZM30 18L42 22L38 36L28 41L26 31Z" fill="#a9d4f0" /><text x="12" y="36" fontFamily='"Liberation Serif", serif' fontStyle="italic" fontWeight="700" fontSize="33" fill="#f7ab1c" textLength="25" lengthAdjust="spacingAndGlyphs">N</text></Tile48>) },
  { key: 'spotify', on: true, icon: (
    <Tile48><circle cx="24" cy="25" r="22.500" fill="#1ed760" /><g fill="none" stroke="#08160c" strokeLinecap="round"><path d="M10 17Q25 13 39 20" strokeWidth="4.500" /><path d="M12 25Q25 22 35 28" strokeWidth="3.800" /><path d="M13 33Q24 30 33 35" strokeWidth="3" /></g></Tile48>) },
  { key: 'code', on: true, icon: (
    <Tile48><path d="M36 0L47 4V46L36 50L1 39L36 42Z" fill="#0078d0" /><path d="M5 14L27 31V11L5 28" fill="none" stroke="#0078d0" strokeWidth="4.500" /></Tile48>) },
  { key: 'hspui', on: true, icon: (
    <Tile48><rect width="48" height="50" fill="#fff" /><g fill="#0c8480" fontFamily='"Liberation Sans", sans-serif' fontWeight="700" fontSize="21"><text x="1" y="20" textLength="46" lengthAdjust="spacingAndGlyphs">HSP</text><text x="4" y="45" textLength="29">UI</text></g></Tile48>) },
];

const MENUS = [['File', 36, 64], ['Edit', 40, 69], ['Graph', 64, 92], ['Signal', 64, 91], ['Axis', 42, 70], ['Tools', 56, 85], ['Window', 87, 115], ['Help', 49, 60]];

export default function App() {
  return (
    <Screen>
      <GlobalStyle />
      <TitleBar>
        <TitleGroup>
          <AppIcon />
          <Fit w={206} size={24.5}>CosmosScope (TM)</Fit>
        </TitleGroup>
        <WindowControls>
          <svg width="20" height="20"><path d="M0 11H20" stroke="#000" strokeWidth="2" /></svg>
          <svg width="20" height="20"><path d="M1 5H15V19H1ZM5 5V1H19V15H15" fill="none" stroke="#000" strokeWidth="2" /></svg>
          <svg width="20" height="20"><path d="M0 0L20 20M20 0L0 20" stroke="#000" strokeWidth="2" /></svg>
        </WindowControls>
      </TitleBar>
      <MenuBar>
        {MENUS.map(([t, w, slot]) => (
          <MenuItem key={t} $slot={slot}><Fit w={w} size={24.5}>{t}</Fit></MenuItem>
        ))}
      </MenuBar>
      <ToolBar>
        {TOOL_GROUPS.map((g, i) => (
          <ToolGroup key={i}>{g.map((icon, j) => <ToolButton key={j}>{icon}</ToolButton>)}</ToolGroup>
        ))}
      </ToolBar>

      <Child>
        <ChildInner>
          <ChildTitle>
            <ChildName>
              <svg width="32" height="22" viewBox="0 0 32 22">
                <path d="M0 21V17L4 16L8 12H5L9 10H12L16 4L20 1H24L22 9H26L25 15L28 14V11H32V15H30L28 18H31V21H15L17 16H12L7 18L5 19V17L2 21Z" fill="#f00" />
                <path d="M26 5H32V9H26Z" fill="#f00" />
              </svg>
              <Fit w={71} size={23.5}>Graph0</Fit>
            </ChildName>
            <ChildButtons>
              <ChildButton><svg width="26" height="22"><path d="M6 18H18" stroke="#000" strokeWidth="4" /></svg></ChildButton>
              <ChildButton><svg width="26" height="22"><path d="M5 10H15V19H5ZM5 11H15M9 8V4H19V14H16M9 4H20" fill="none" stroke="#000" strokeWidth="2.500" /></svg></ChildButton>
              <ChildButton $apart><svg width="26" height="22"><path d="M7 4L21 18M21 4L7 18" stroke="#000" strokeWidth="3" /></svg></ChildButton>
            </ChildButtons>
          </ChildTitle>
          <Well><WellInner><Chart /></WellInner></Well>
        </ChildInner>
      </Child>

      <Palette>
        <PaletteRow>
          <PaletteButton><Keyboard /></PaletteButton>
          <PaletteButton $w={96}><Annotate /></PaletteButton>
          <PaletteButton $down><Scope /></PaletteButton>
          <PaletteButton><Probe /></PaletteButton>
          <PaletteButton><Calculator /></PaletteButton>
          <PaletteButton><Reels /></PaletteButton>
          <PaletteButton><Mixer /></PaletteButton>
          <PaletteButton><Membrane /></PaletteButton>
        </PaletteRow>
        <Brand>
          <BrandMark />
          <BrandText>
            <Fit w={153} size={24.5} weight={700}>CosmosScope</Fit>
            <BrandBars><BrandBar $c="#e6b028" /><BrandBar $c="#e88c8a" /><BrandBar $c="#c68cec" /></BrandBars>
          </BrandText>
        </Brand>
      </Palette>
      <Status><StatusInner /></Status>

      <TaskBar>
        <Start>
          <svg width="33" height="32" viewBox="0 0 33 32"><path d="M0 4L12 2V15H0ZM14 2L33 0V15H14ZM0 17H12V30L0 28ZM14 17H33V32L14 30Z" fill="#fff" /></svg>
        </Start>
        <Search>
          <svg width="44" height="44"><circle cx="22" cy="22" r="18.500" fill="none" stroke="#f2f2f2" strokeWidth="5" /></svg>
          <Fit w={392} size={29.5} color="#9b9b9b">I’m Cortana. Ask me anything.</Fit>
        </Search>
        <TaskView>
          <svg width="40" height="28"><path d="M9 1H31V27H9ZM6 5H1V23H6M34 5H39V23H34" fill="none" stroke="#fff" strokeWidth="2" /></svg>
        </TaskView>
        {TASKS.map((t) => (
          <Task key={t.key}>{t.icon}<Underline $w={78} $on={t.on} $stack={t.stack} /></Task>
        ))}
        <ActiveTask><ScopeTile /><Underline $w={92} $on /></ActiveTask>
        <Tray>
          <TrayItem $gap={0}><svg width="24" height="16"><path d="M1 15L12 3L23 15" fill="none" stroke="#fff" strokeWidth="2.200" /></svg></TrayItem>
          <TrayItem $gap={22}>
            <svg width="32" height="28"><path d="M1 5H27V21H1ZM5 8V18M29 9V17" fill="none" stroke="#fff" strokeWidth="2" /><path d="M21 10L30 28H12Z" fill="#fdc010" /><path d="M21 16V22M21 24V26" stroke="#222" strokeWidth="2" /></svg>
          </TrayItem>
          <TrayItem $gap={12}>
            <svg width="34" height="28"><path d="M1 9H6L12 2V26L6 19H1ZM17 10Q20 14 17 18" fill="none" stroke="#fff" strokeWidth="2" /><path d="M21 6Q27 14 21 22" fill="none" stroke="#999" strokeWidth="2" /><path d="M26 2Q36 14 26 26" fill="none" stroke="#666" strokeWidth="2" /></svg>
          </TrayItem>
          <TrayItem $gap={16}>
            <svg width="32" height="28"><path d="M9 3H31V20H5V12M1 3H8V11H1ZM5 12V27M16 20V26M10 26H24" fill="none" stroke="#fff" strokeWidth="2" /></svg>
          </TrayItem>
          <TrayItem $gap={16}>
            <svg width="32" height="32"><path d="M0 0H32V26H20L16 32L12 26H0Z" fill="#fff" /><path d="M6 7H26M6 13H26M6 19H18" stroke="#111" strokeWidth="2" /></svg>
          </TrayItem>
          <TrayItem $gap={16}>
            <svg width="46" height="26"><rect x="1" y="1" width="44" height="24" fill="none" stroke="#fff" strokeWidth="2" /><path d="M6 7H40M6 13H40" stroke="#fff" strokeWidth="2" strokeDasharray="2 2" /><path d="M6 19H10M13 19H33M36 19H40" stroke="#fff" strokeWidth="2" /></svg>
          </TrayItem>
          <TrayItem $gap={22}><Fit w={47} size={24} color="#f0f0f0">ENG</Fit></TrayItem>
          <Clock>
            <Fit w={84} size={24} color="#f0f0f0">1:41 PM</Fit>
            <Fit w={116} size={24} color="#f0f0f0">10/25/2018</Fit>
          </Clock>
          <ShowDesktop />
        </Tray>
      </TaskBar>
    </Screen>
  );
}
